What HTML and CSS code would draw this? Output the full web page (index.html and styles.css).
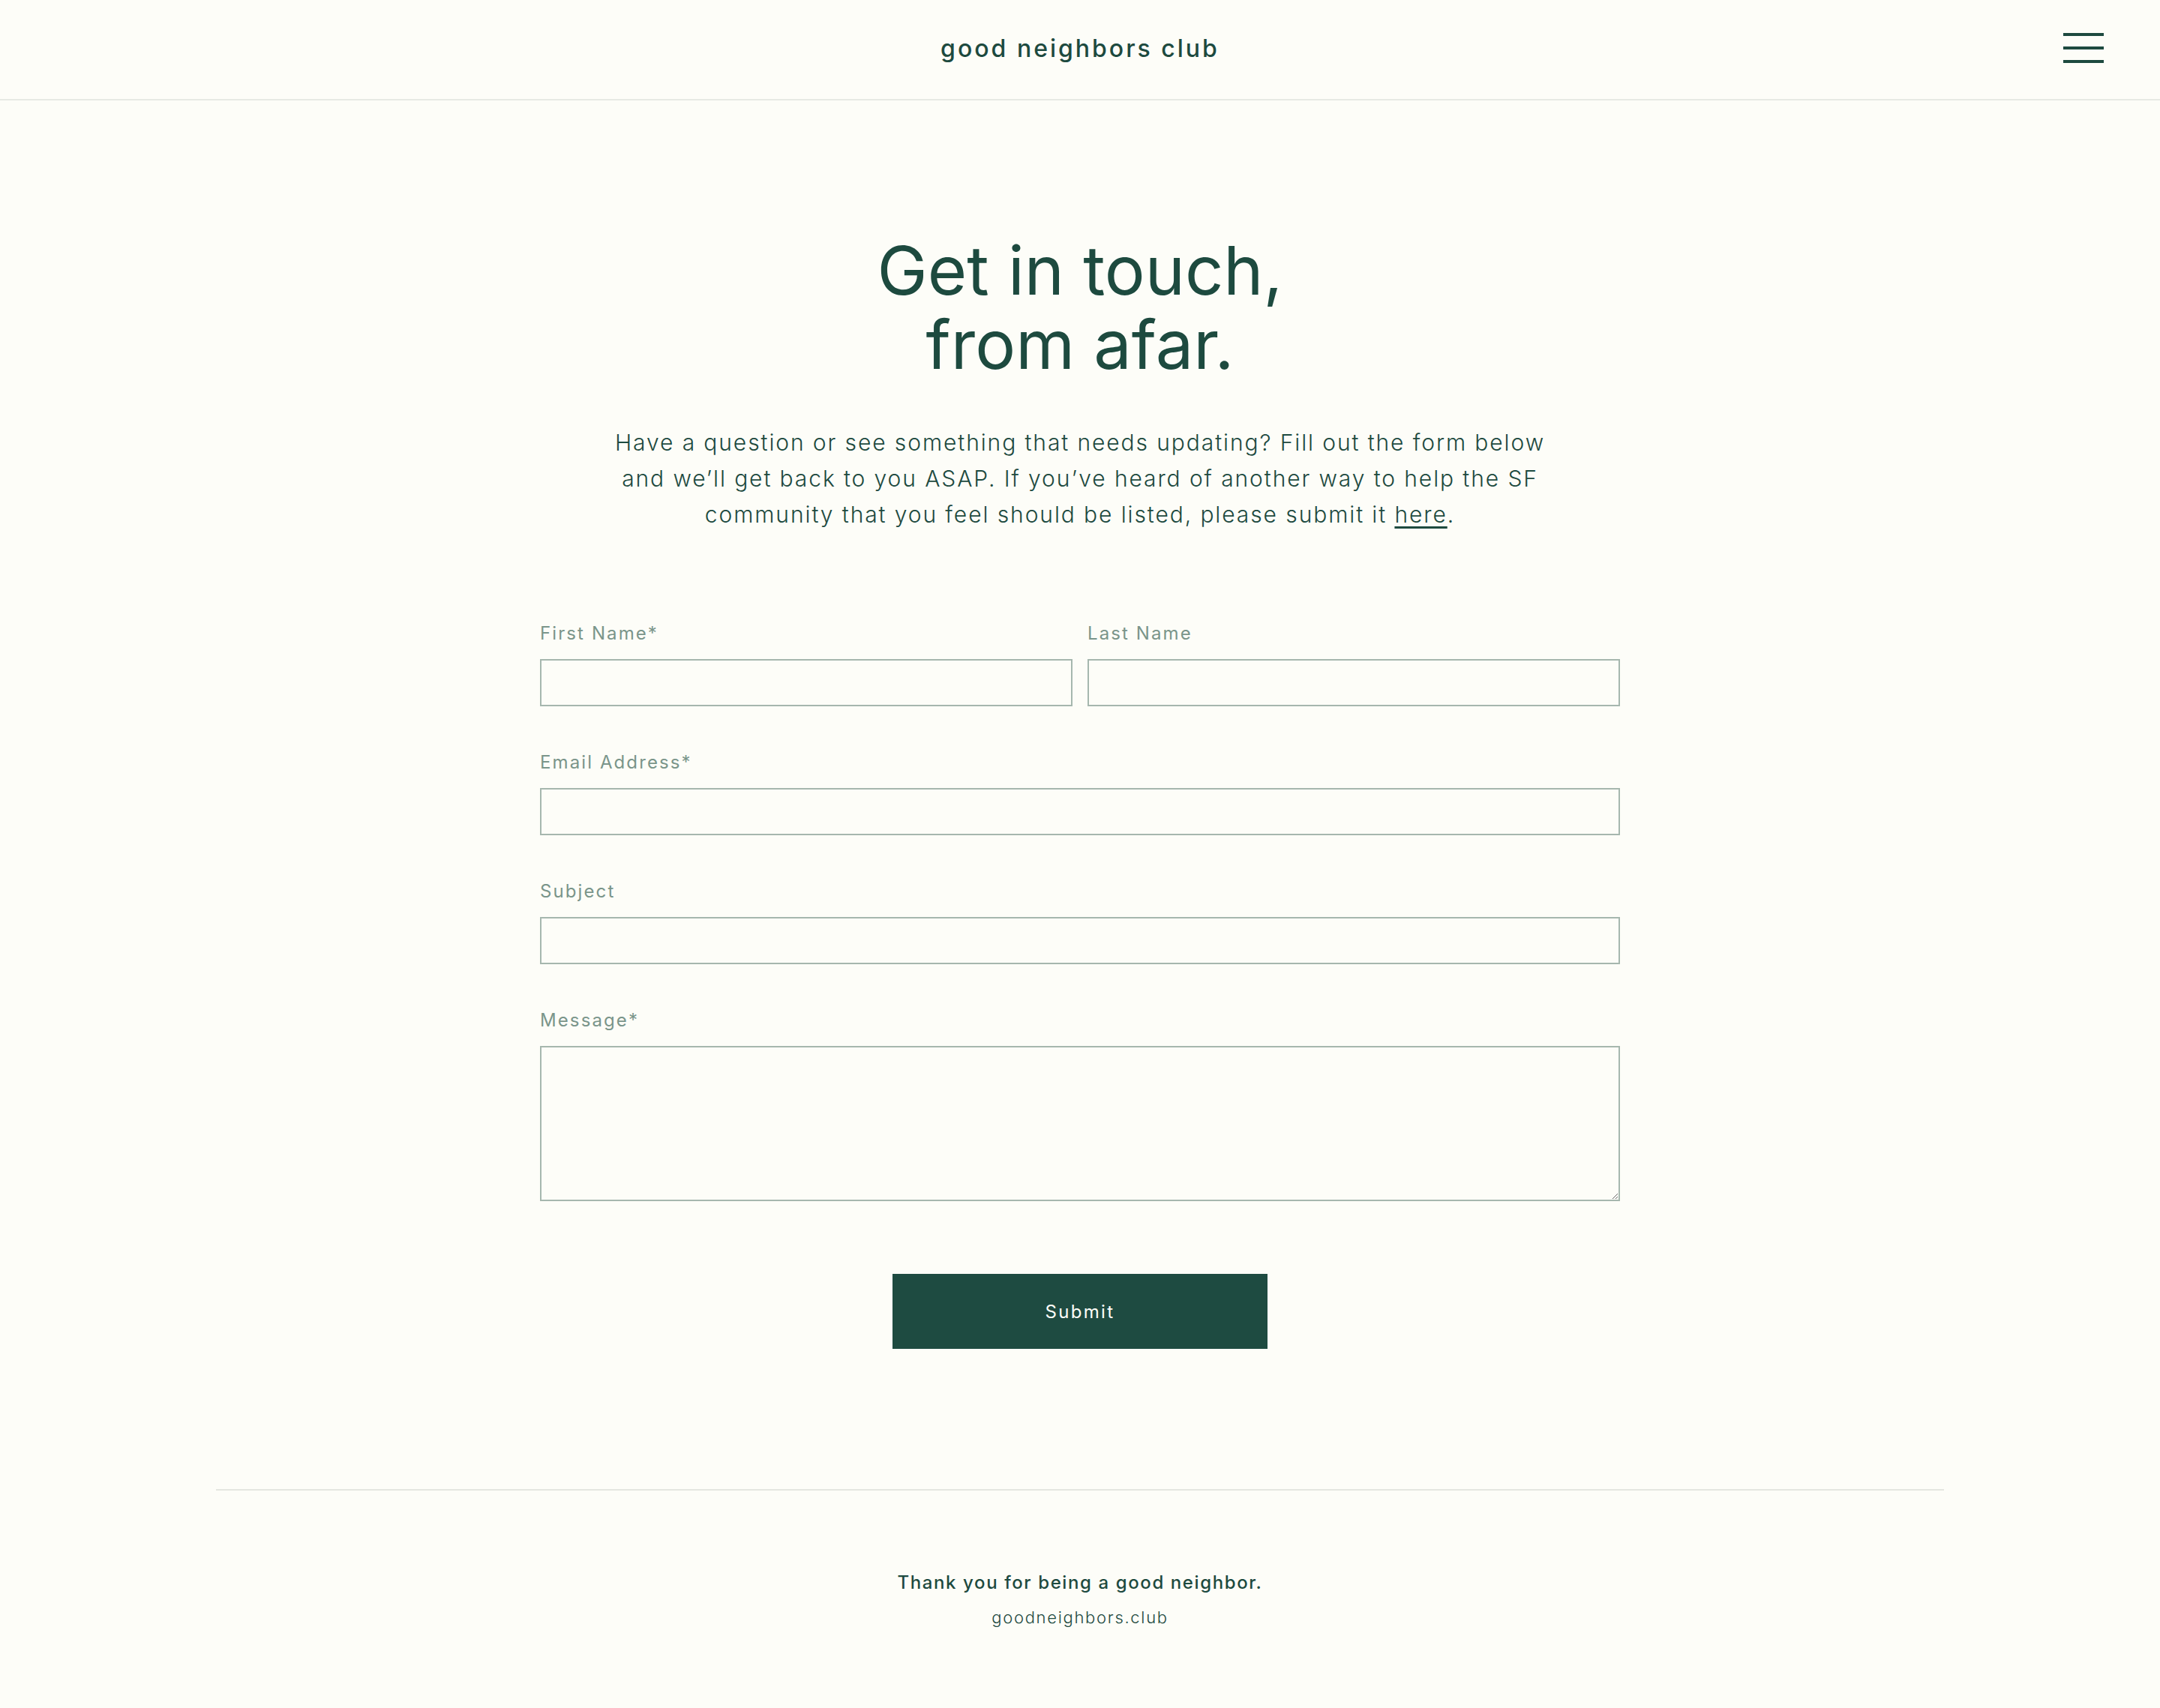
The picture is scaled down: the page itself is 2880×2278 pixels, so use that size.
FILE: index.html
```html
<!DOCTYPE html>
<html lang="en">
<head>
<meta charset="utf-8">
<title>Contact — good neighbors club</title>
<link rel="stylesheet" href="styles.css">
</head>
<body>
<header class="site-header">
  <div class="header-spacer"></div>
  <a class="logo" href="#">good neighbors club</a>
  <button class="menu-btn" aria-label="Menu">
    <span class="bar"></span><span class="bar"></span><span class="bar"></span>
  </button>
</header>

<main class="content">
  <h1 class="title">Get in touch,<br>from afar.</h1>
  <p class="intro">Have a question or see something that needs updating? Fill out the form below and we’ll get back to you ASAP. If you’ve heard of another way to help the SF community that you feel should be listed, please submit it <a href="#">here</a>.</p>

  <form class="contact-form">
    <div class="row">
      <div class="field">
        <label class="label">First Name*</label>
        <input class="input" type="text">
      </div>
      <div class="field">
        <label class="label">Last Name</label>
        <input class="input" type="text">
      </div>
    </div>
    <div class="field">
      <label class="label">Email Address*</label>
      <input class="input" type="email">
    </div>
    <div class="field">
      <label class="label">Subject</label>
      <input class="input" type="text">
    </div>
    <div class="field">
      <label class="label">Message*</label>
      <textarea class="input textarea"></textarea>
    </div>
    <div class="actions">
      <button class="submit" type="button">Submit</button>
    </div>
  </form>
</main>

<footer class="site-footer">
  <p class="thanks">Thank you for being a good neighbor.</p>
  <p class="domain">goodneighbors.club</p>
</footer>
</body>
</html>
```

FILE: styles.css
```css
* { box-sizing: border-box; }

html, body {
  margin: 0;
  padding: 0;
  background: #fdfdf8;
  color: #1d4a3f;
  font-family: Inter, "Open Sans", sans-serif;
}

.site-header {
  height: 134px;
  display: grid;
  grid-template-columns: 1fr auto 1fr;
  align-items: center;
  border-bottom: 2px solid #e7eae4;
  padding: 0 75px 4px 75px;
}

.logo {
  font-size: 32px;
  font-weight: 500;
  letter-spacing: 3px;
  color: #1d4a3f;
  text-decoration: none;
}

.menu-btn {
  justify-self: end;
  width: 54px;
  height: 40px;
  padding: 0;
  border: 0;
  background: none;
  display: flex;
  flex-direction: column;
  justify-content: space-between;
  cursor: pointer;
}

.menu-btn .bar {
  display: block;
  height: 4px;
  width: 100%;
  background: #1d4a3f;
}

.content {
  width: 1440px;
  margin: 0 auto;
  padding-top: 177px;
}

.title {
  margin: 0;
  text-align: center;
  font-size: 90px;
  line-height: 99px;
  font-weight: 400;
  color: #1d4a3f;
}

.intro {
  width: 1270px;
  margin: 57px auto 0;
  text-align: center;
  font-size: 30px;
  line-height: 48px;
  font-weight: 300;
  letter-spacing: 1.9px;
}

.intro a {
  color: inherit;
  text-decoration: underline;
  text-underline-offset: 5px;
}

.contact-form {
  margin-top: 120px;
  display: flex;
  flex-direction: column;
  gap: 60px;
}

.row {
  display: grid;
  grid-template-columns: 1fr 1fr;
  gap: 20px;
}

.field {
  display: flex;
  flex-direction: column;
  gap: 19px;
}

.label {
  font-size: 24px;
  line-height: 30px;
  letter-spacing: 2.1px;
  font-weight: 400;
  color: #7a958a;
}

.input {
  height: 63px;
  width: 100%;
  border: 2px solid #a6b7ae;
  background: #fdfdf8;
  border-radius: 0;
  font: inherit;
  font-size: 24px;
  padding: 0 16px;
  color: #1d4a3f;
}

.textarea {
  height: 207px;
  resize: vertical;
  padding: 16px;
}

.actions {
  display: flex;
  justify-content: center;
  margin-top: 37px;
}

.submit {
  width: 500px;
  height: 100px;
  border: 0;
  background: #1e4b41;
  color: #fdfdf8;
  font-family: inherit;
  font-size: 24px;
  letter-spacing: 2.3px;
  font-weight: 400;
  cursor: pointer;
}

.site-footer {
  width: 2304px;
  margin: 187px auto 0;
  border-top: 2px solid #e4e6e0;
  padding: 106px 0 98px;
  text-align: center;
}

.thanks {
  margin: 0;
  font-size: 24px;
  line-height: 34px;
  font-weight: 500;
  letter-spacing: 1.6px;
}

.domain {
  margin: 14px 0 0;
  font-size: 22px;
  line-height: 30px;
  font-weight: 300;
  letter-spacing: 1.7px;
}
```
